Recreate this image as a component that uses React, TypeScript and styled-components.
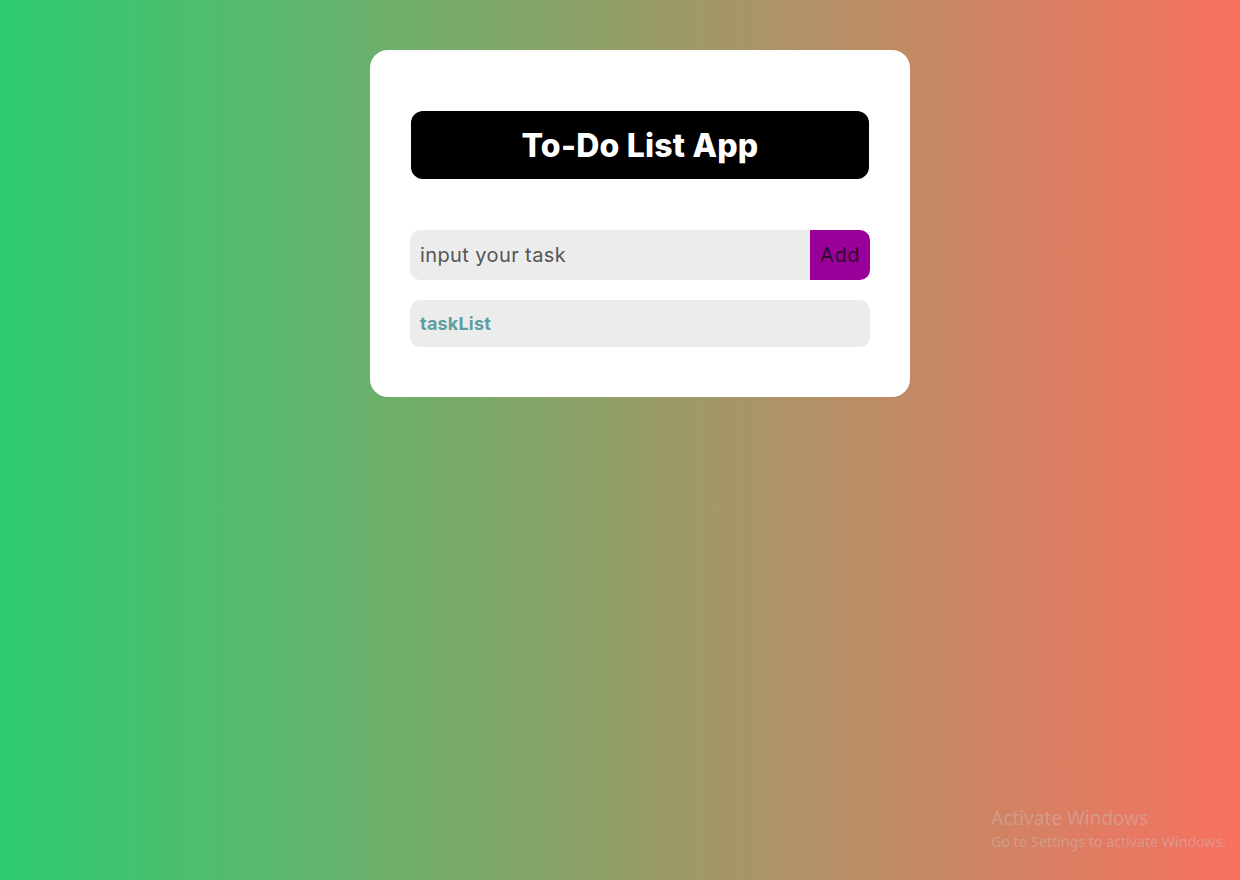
import React from "react";
import styled, { createGlobalStyle } from "styled-components";

const Global = createGlobalStyle`
  html, body { margin: 0; padding: 0; }
  body {
    min-height: 880px;
    font-family: "Poppins", Inter, "Noto Sans", sans-serif;
    background: linear-gradient(to right, #2ecc71, #f87160);
  }
  #root { min-height: 880px; }
`;

const Page = styled.div`
  min-height: 880px;
  display: flex;
  justify-content: center;
  align-items: flex-start;
  padding: 50px 0 0 40px;
  box-sizing: border-box;
`;

const Card = styled.div`
  width: 540px;
  box-sizing: border-box;
  background: #fff;
  border-radius: 18px;
  padding: 61px 40px 50px;
  display: flex;
  flex-direction: column;
`;

const Title = styled.h1`
  margin: 0 1px;
  height: 68px;
  background: #000;
  border-radius: 12px;
  color: #fff;
  font-family: Inter, "Noto Sans", sans-serif;
  font-weight: 800;
  font-size: 32px;
  letter-spacing: 0.2px;
  display: flex;
  align-items: center;
  justify-content: center;
`;

const Row = styled.div`
  margin-top: 51px;
  display: flex;
  height: 50px;
  border-radius: 10px;
  overflow: hidden;
`;

const Input = styled.input`
  flex: 1;
  border: none;
  outline: none;
  background: #ececec;
  padding: 0 10px;
  font-family: Inter, "Noto Sans", sans-serif;
  font-size: 20px;
  letter-spacing: 0.4px;
  color: #333;
  &::placeholder { color: #555; }
`;

const AddButton = styled.button`
  width: 60px;
  border: none;
  background: #990099;
  color: #2a0a2a;
  font-family: Inter, "Noto Sans", sans-serif;
  font-size: 20px;
  letter-spacing: 0.5px;
  padding: 0;
  cursor: pointer;
`;

const TaskList = styled.div`
  margin-top: 20px;
  height: 47px;
  background: #ececec;
  border-radius: 10px;
  padding: 0 10px;
  display: flex;
  align-items: center;
  font-family: Inter, "Noto Sans", sans-serif;
  font-weight: 700;
  font-size: 18px;
  letter-spacing: 0.2px;
  color: #5f9ea0;
`;

const Watermark = styled.div`
  position: fixed;
  left: 991px;
  top: 807px;
  color: rgba(200, 200, 200, 0.4);
  font-family: "Noto Sans", "Open Sans", sans-serif;
  line-height: 1.2;
`;

const WmTitle = styled.div`
  font-size: 19px;
`;

const WmSub = styled.div`
  font-size: 14.2px;
  margin-top: 3px;
`;

export default function App() {
  return (
    <>
      <Global />
      <Page>
        <Card>
          <Title>To-Do List App</Title>
          <Row>
            <Input placeholder="input your task" />
            <AddButton>Add</AddButton>
          </Row>
          <TaskList>taskList</TaskList>
        </Card>
      </Page>
      <Watermark>
        <WmTitle>Activate Windows</WmTitle>
        <WmSub>Go to Settings to activate Windows.</WmSub>
      </Watermark>
    </>
  );
}
